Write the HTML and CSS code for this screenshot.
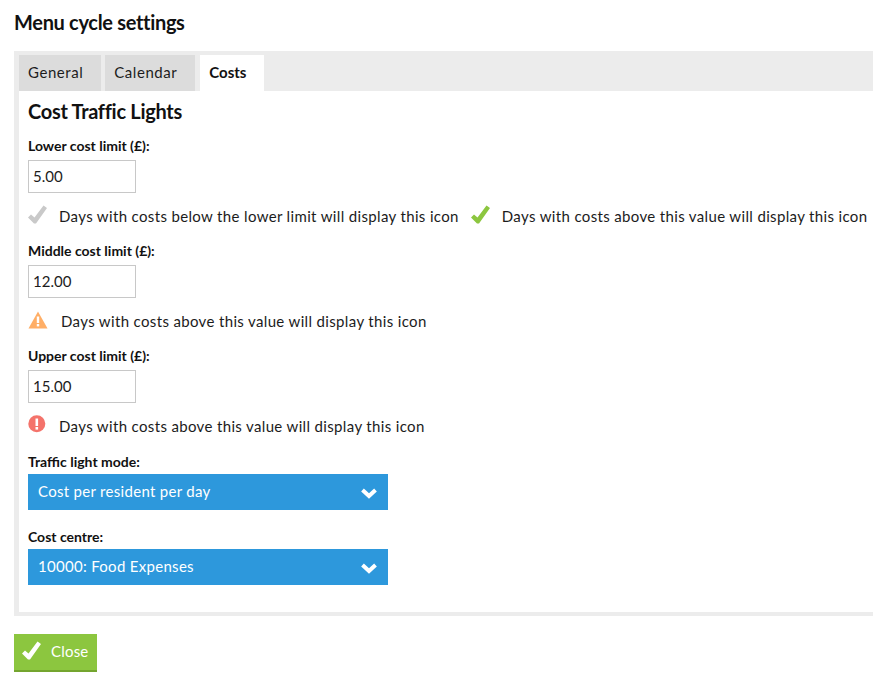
FILE: index.html
```html
<!DOCTYPE html>
<html lang="en">
<head>
<meta charset="utf-8">
<title>Menu cycle settings</title>
<link rel="stylesheet" href="styles.css">
</head>
<body>
<h1 class="title">Menu cycle settings</h1>
<section class="panel">
  <nav class="tabs">
    <a class="tab">General</a>
    <a class="tab">Calendar</a>
    <a class="tab tab-active">Costs</a>
  </nav>
  <div class="content">
    <h2 class="heading">Cost Traffic Lights</h2>

    <div class="group">
      <label class="label">Lower cost limit (£):</label>
      <input class="input" type="text" value="5.00">
      <div class="hint">
        <span class="hint-item">
          <svg class="icon icon-check" width="20" height="20" viewBox="0 0 20 20"><path class="check-grey" d="M0 12.500 L3 9.500 L6.500 12.500 L15.500 0.500 L19 3 L8 18.500 L6 18.500 Z"/></svg>
          <span>Days with costs below the lower limit will display this icon</span>
        </span>
        <span class="hint-item hint-second">
          <svg class="icon icon-check" width="20" height="20" viewBox="0 0 20 20"><path class="check-green" d="M0 12.500 L3 9.500 L6.500 12.500 L15.500 0.500 L19 3 L8 18.500 L6 18.500 Z"/></svg>
          <span>Days with costs above this value will display this icon</span>
        </span>
      </div>
    </div>

    <div class="group">
      <label class="label">Middle cost limit (£):</label>
      <input class="input" type="text" value="12.00">
      <div class="hint">
        <span class="hint-item hint-warn">
          <svg class="icon" width="20" height="20" viewBox="0 0 20 20"><path class="warn" d="M10 1.500 L19.500 18.500 L0.500 18.500 Z"/><rect class="mark" x="8.800" y="6.500" width="2.400" height="6.500"/><rect class="mark" x="8.800" y="14" width="2.400" height="2.400"/></svg>
          <span>Days with costs above this value will display this icon</span>
        </span>
      </div>
    </div>

    <div class="group">
      <label class="label">Upper cost limit (£):</label>
      <input class="input" type="text" value="15.00">
      <div class="hint">
        <span class="hint-item">
          <svg class="icon" width="20" height="20" viewBox="0 0 20 20"><circle class="error" cx="8.800" cy="8.800" r="8.500"/><rect class="mark" x="7.500" y="3.500" width="2.600" height="7.500"/><rect class="mark" x="7.500" y="12" width="2.600" height="2.600"/></svg>
          <span>Days with costs above this value will display this icon</span>
        </span>
      </div>
    </div>

    <div class="select-group">
      <label class="label">Traffic light mode:</label>
      <div class="select">
        <span>Cost per resident per day</span>
        <svg class="chevron" width="18" height="12" viewBox="0 0 18 12"><polyline points="2.500,3 9,9 15.500,3"/></svg>
      </div>
    </div>

    <div class="select-group">
      <label class="label">Cost centre:</label>
      <div class="select">
        <span>10000: Food Expenses</span>
        <svg class="chevron" width="18" height="12" viewBox="0 0 18 12"><polyline points="2.500,3 9,9 15.500,3"/></svg>
      </div>
    </div>
  </div>
</section>
<button class="close" type="button">
  <svg width="20" height="20" viewBox="0 0 20 20"><path class="check-white" d="M0 12.500 L3 9.500 L6.500 12.500 L15.500 0.500 L19 3 L8 18.500 L6 18.500 Z"/></svg>
  <span>Close</span>
</button>
</body>
</html>
```
FILE: styles.css
```css
* { box-sizing: border-box; }
html, body { margin: 0; padding: 0; }
body {
  width: 873px;
  height: 683px;
  overflow: hidden;
  background: #fff;
  color: #1c1c1c;
  font-family: Lato, "Noto Sans", sans-serif;
  font-size: 15px;
  padding: 0 0 0 14px;
}
.title {
  margin: 0;
  padding-top: 10px;
  height: 51px;
  font-size: 20px;
  line-height: 24px;
  font-weight: 700;
  letter-spacing: -0.32px;
  color: #111;
}
.panel {
  height: 565px;
  border: solid #ececec;
  border-width: 0 0 4px 5px;
  background: #fff;
}
.tabs {
  display: flex;
  height: 40px;
  padding-top: 4px;
  margin-left: -5px;
  padding-left: 5px;
  background: #ececec;
}
.tab {
  display: flex;
  align-items: center;
  height: 36px;
  padding: 0 18px 2px 9px;
  margin-right: 4px;
  background: #dcdcdc;
  letter-spacing: 0.55px;
}
.tab-active {
  background: #fff;
  font-weight: 700;
  color: #111;
  margin-left: 1px;
  letter-spacing: 0;
}
.content { padding: 0 0 0 9px; }
.heading {
  margin: 0;
  padding-top: 8px;
  height: 46px;
  font-size: 20px;
  line-height: 24px;
  font-weight: 700;
  letter-spacing: -0.3px;
  color: #111;
}
.group { height: 105px; }
.label {
  display: block;
  height: 23px;
  font-size: 14px;
  line-height: 18px;
  font-weight: 700;
  color: #111;
}
.input {
  display: block;
  width: 108px;
  height: 33px;
  padding: 0 4px 2px;
  border: 1px solid #c8c8c8;
  background: #fff;
  color: #1c1c1c;
  font: 15px Lato, "Noto Sans", sans-serif;
}
.hint {
  display: flex;
  align-items: center;
  height: 24px;
  margin-top: 11px;
  letter-spacing: 0.35px;
  white-space: nowrap;
}
.hint-item { display: flex; align-items: center; }
.hint-second { margin-left: 12px; }
.icon { flex: none; margin-right: 11px; position: relative; top: -1px; }
.hint-warn .icon { margin-right: 13px; }
.check-grey { fill: #c9c9c9; }
.check-green { fill: #8cc63f; }
.check-white { fill: #fff; }
.warn { fill: #ffae66; }
.error { fill: #f4736b; }
.mark { fill: #fff; }
.select-group { height: 75px; padding-top: 1px; }
.select-group .label { height: 21px; }
.select {
  display: flex;
  align-items: center;
  justify-content: space-between;
  width: 360px;
  height: 36px;
  padding: 0 10px 2px;
  background: #2d98dc;
  color: #fff;
  letter-spacing: 0.3px;
}
.chevron { fill: none; stroke: #fff; stroke-width: 4; position: relative; top: 2px; }
.close {
  display: flex;
  align-items: center;
  gap: 9px;
  width: 83px;
  height: 38px;
  margin-top: 18px;
  padding: 0 0 3px 8px;
  border: 0;
  border-bottom: 2px solid #74a52f;
  background: #8cc63f;
  color: #fff;
  font: 15px Lato, "Noto Sans", sans-serif;
  letter-spacing: 0.2px;
}
```
